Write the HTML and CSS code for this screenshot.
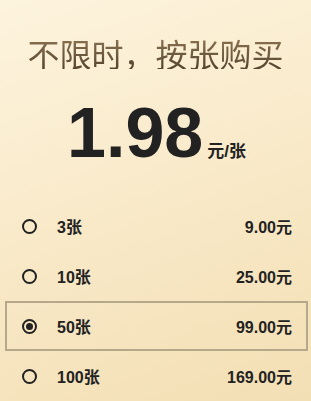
FILE: index.html
```html
<!DOCTYPE html>
<html lang="zh-CN">
<head>
    <meta charset="UTF-8">
    <meta name="viewport" content="width=device-width, initial-scale=1.0">
    <title>按张购买</title>
    <link rel="stylesheet" href="styles.css">
</head>
<body>

<div class="page">
    <h1 class="title">不限时，按张购买</h1>

    <div class="price">
        <span class="price-num">1.98</span>
        <span class="price-unit">元/张</span>
    </div>

    <ul class="options">
        <li class="option">
            <span class="radio"></span>
            <span class="option-name">3张</span>
            <span class="option-price">9.00元</span>
        </li>
        <li class="option">
            <span class="radio"></span>
            <span class="option-name">10张</span>
            <span class="option-price">25.00元</span>
        </li>
        <li class="option selected">
            <span class="radio"></span>
            <span class="option-name">50张</span>
            <span class="option-price">99.00元</span>
        </li>
        <li class="option">
            <span class="radio"></span>
            <span class="option-name">100张</span>
            <span class="option-price">169.00元</span>
        </li>
    </ul>
</div>

</body>
</html>
```

FILE: styles.css
```css
html, body {
    margin: 0;
    padding: 0;
}
body {
    font-family: "Liberation Sans", Arial, "Noto Sans CJK SC", sans-serif;
    color: #222;
    background: linear-gradient(160deg, #fdf4de 0%, #f8e8c6 55%, #f3dfb4 100%);
    min-height: 401px;
}
.page {
    padding-top: 37px;
}
.title {
    margin: 0;
    font-family: "Noto Sans CJK SC", sans-serif;
    font-size: 32px;
    font-weight: normal;
    line-height: 32px;
    text-align: center;
    background: linear-gradient(to bottom, #8c7352, #55452f);
    -webkit-background-clip: text;
    background-clip: text;
    color: transparent;
}
.price {
    margin-top: 29px;
    display: flex;
    justify-content: center;
    align-items: baseline;
    padding-left: 2px;
}
.price-num {
    font-size: 70px;
    font-weight: bold;
    line-height: 70px;
}
.price-unit {
    margin-left: 4px;
    font-size: 17px;
    font-weight: bold;
}
.options {
    list-style: none;
    margin: 33px 0 0;
    padding: 0;
}
.option {
    display: flex;
    align-items: center;
    height: 46px;
    margin: 0 3px 0 5px;
    padding: 0 14px 0 15px;
    border: 2px solid transparent;
    font-size: 16px;
    font-weight: bold;
}
.option.selected {
    border-color: #b6a98b;
}
.radio {
    box-sizing: border-box;
    width: 15px;
    height: 15px;
    border: 2px solid #222;
    border-radius: 50%;
    display: flex;
    align-items: center;
    justify-content: center;
}
.selected .radio::after {
    content: "";
    width: 7px;
    height: 7px;
    border-radius: 50%;
    background: #222;
}
.option-name {
    margin-left: 20px;
    flex: 1;
}
.option-price {
    text-align: right;
}
```
